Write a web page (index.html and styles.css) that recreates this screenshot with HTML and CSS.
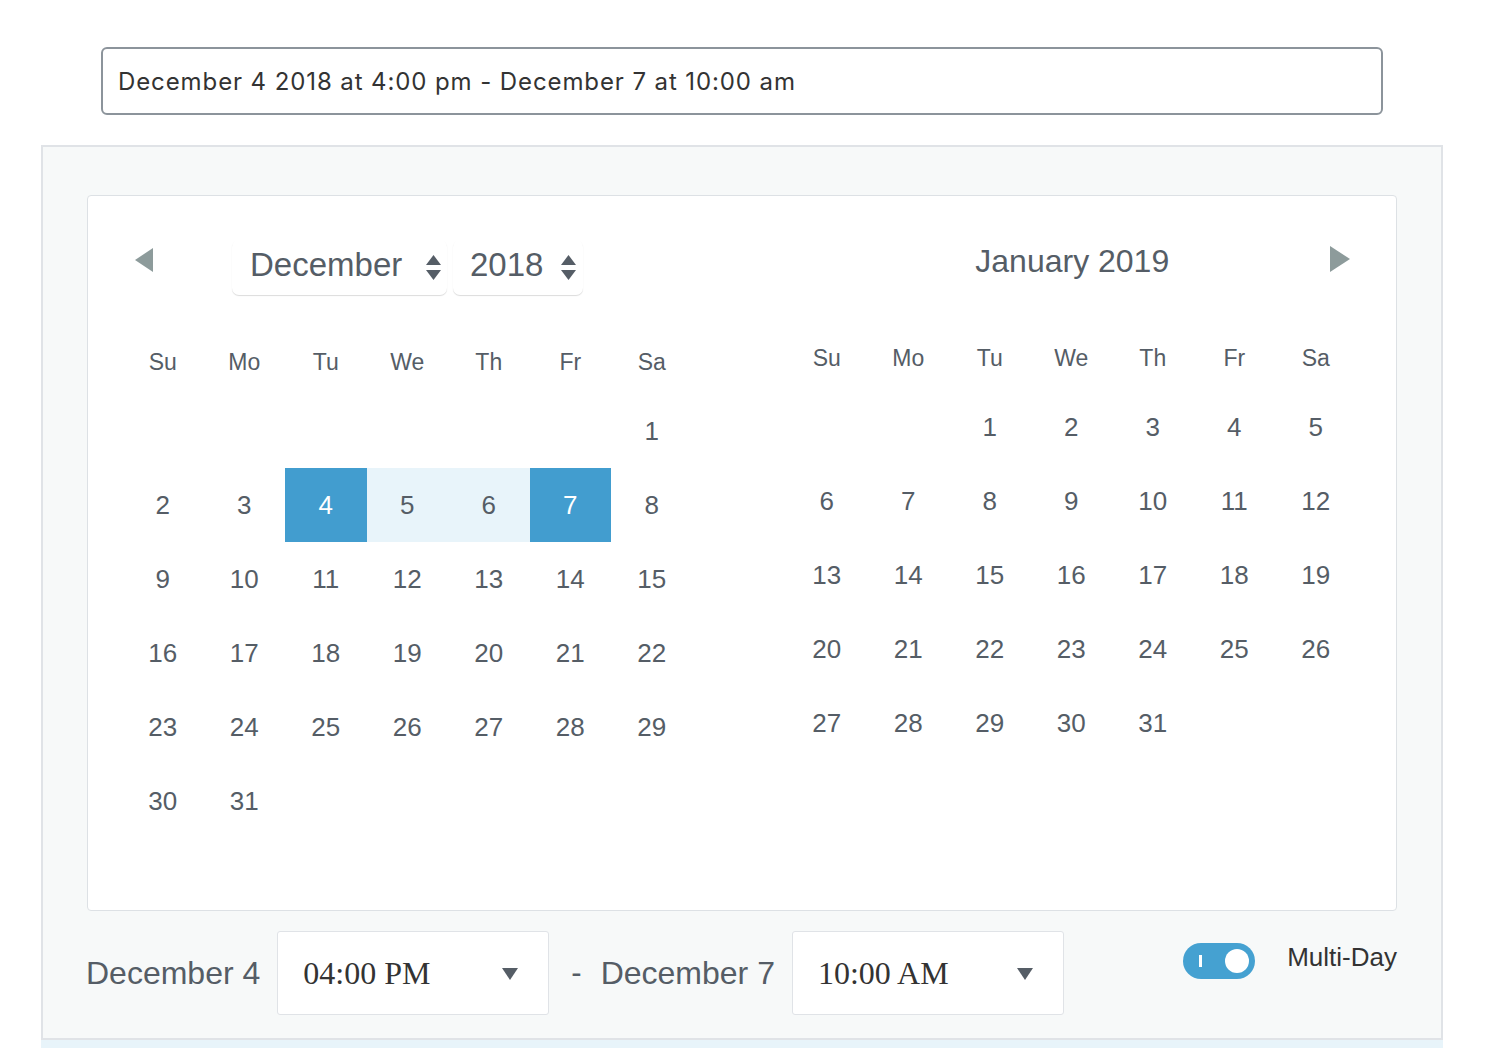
FILE: index.html
```html
<html><head>
<link rel="stylesheet" href="styles.css">
</head>
<body>
  <div class="field">December 4 2018 at 4:00 pm - December 7 at 10:00 am</div>

  <div class="picker">
    <div class="card">
      <div class="month">
        <div class="month-head left-head">
          <div class="nav nav-prev">
            <svg width="18" height="24" viewBox="0 0 18 24"><polygon points="18,0 0,12 18,24"/></svg>
          </div>
          <div class="select month-select">
            <span>December</span>
            <svg class="sort" width="15" height="25" viewBox="0 0 15 25"><polygon points="7.5,0 15,10 0,10"/><polygon points="0,15 15,15 7.5,25"/></svg>
          </div>
          <div class="select year-select">
            <span>2018</span>
            <svg class="sort" width="15" height="25" viewBox="0 0 15 25"><polygon points="7.5,0 15,10 0,10"/><polygon points="0,15 15,15 7.5,25"/></svg>
          </div>
        </div>
        <div class="grid" id="decGrid"></div>
      </div>

      <div class="month month-right">
        <div class="month-head right-head">
          <span></span>
          <div class="title">January 2019</div>
          <div class="nav nav-next">
            <svg width="20" height="26" viewBox="0 0 20 26"><polygon points="0,0 20,13 0,26"/></svg>
          </div>
        </div>
        <div class="grid" id="janGrid"></div>
      </div>
    </div>

    <div class="footer">
      <span class="date-label">December 4</span>
      <div class="time-select">
        <span>04:00 PM</span>
        <svg width="16" height="12" viewBox="0 0 16 12"><polygon points="0,0 16,0 8,12"/></svg>
      </div>
      <span class="dash">-</span>
      <span class="date-label">December 7</span>
      <div class="time-select">
        <span>10:00 AM</span>
        <svg width="16" height="12" viewBox="0 0 16 12"><polygon points="0,0 16,0 8,12"/></svg>
      </div>
      <div class="multi">
        <div class="toggle"><span class="toggle-bar"></span><span class="toggle-knob"></span></div>
        <span class="multi-label">Multi-Day</span>
      </div>
    </div>
  </div>
  <div class="below"></div>

<script>
const weekdays = ['Su', 'Mo', 'Tu', 'We', 'Th', 'Fr', 'Sa'];

function buildMonth(el, offset, days, selected, range) {
    weekdays.forEach(w => {
        const d = document.createElement('div');
        d.className = 'wd';
        d.textContent = w;
        el.appendChild(d);
    });
    for (let i = 0; i < offset; i++) {
        const d = document.createElement('div');
        d.className = 'day';
        el.appendChild(d);
    }
    for (let n = 1; n <= days; n++) {
        const d = document.createElement('div');
        d.className = 'day';
        if (selected.includes(n)) d.classList.add('selected');
        if (range.includes(n)) d.classList.add('in-range');
        d.textContent = n;
        el.appendChild(d);
    }
}

buildMonth(document.getElementById('decGrid'), 6, 31, [4, 7], [5, 6]);
buildMonth(document.getElementById('janGrid'), 2, 31, [], []);
</script>
</body></html>
```

FILE: styles.css
```css
:root {
  --text: #555d66;
  --dark: #333333;
  --blue: #429dcf;
  --range: #e8f4fa;
  --line: #e0e3e7;
  --panel: #f7f9f9;
  --arrow: #8d9b9b;
}

body {
  margin: 0;
  background: #ffffff;
  font-family: 'Liberation Sans', Arial, sans-serif;
  color: var(--text);
}

.field {
  margin: 47px 0 0 101px;
  width: 1282px;
  height: 68px;
  box-sizing: border-box;
  border: 2px solid #8c949b;
  border-radius: 6px;
  padding: 0 15px;
  display: flex;
  align-items: center;
  font-family: Inter, 'Open Sans', sans-serif;
  font-size: 24px;
  letter-spacing: 0.9px;
  color: var(--dark);
}

.picker {
  margin: 30px 0 0 41px;
  width: 1402px;
  box-sizing: border-box;
  background: var(--panel);
  border: 2px solid var(--line);
  padding: 48px 44px 23px 44px;
}

.card {
  height: 716px;
  box-sizing: border-box;
  background: #ffffff;
  border: 1px solid #dde1e5;
  border-radius: 4px;
  padding: 40px 0 0 34px;
  display: flex;
  gap: 93.5px;
}

.month {
  width: 570.5px;
}

.month-head {
  height: 94px;
}

.left-head {
  display: flex;
  align-items: flex-start;
}

.nav svg {
  display: block;
  fill: var(--arrow);
}

.nav-prev {
  margin: 12px 0 0 13px;
}

.select {
  height: 55px;
  box-sizing: border-box;
  margin-top: 4px;
  padding-bottom: 5px;
  border-radius: 7px;
  background: #ffffff;
  box-shadow: 0 1px 1px rgba(0, 0, 0, 0.14);
  display: flex;
  align-items: center;
  justify-content: space-between;
  font-size: 33px;
  color: var(--text);
}

.month-select {
  width: 215px;
  margin-left: 79px;
  padding-left: 18px;
  padding-right: 6px;
}

.year-select {
  width: 130px;
  margin-left: 6px;
  padding-left: 17px;
  padding-right: 7px;
}

.sort {
  fill: var(--text);
  margin-top: 5px;
}

.right-head {
  height: 90px;
  display: grid;
  grid-template-columns: 1fr auto 1fr;
  align-items: start;
}

.title {
  line-height: 50px;
  font-size: 32px;
  color: var(--text);
  margin-left: 2px;
}

.nav-next {
  justify-self: end;
  margin: 10px 7px 0 0;
}

.grid {
  display: grid;
  grid-template-columns: repeat(7, 81.5px);
  grid-template-rows: 64px;
  grid-auto-rows: 74px;
}

.wd {
  display: flex;
  align-items: center;
  justify-content: center;
  font-size: 23px;
}

.day {
  display: flex;
  align-items: center;
  justify-content: center;
  font-size: 26px;
}

.day.in-range {
  background: var(--range);
}

.day.selected {
  background: var(--blue);
  color: #ffffff;
}

.footer {
  margin-top: 20px;
  height: 84px;
  display: flex;
  align-items: center;
}

.date-label {
  font-size: 32px;
  color: var(--text);
  margin-left: -1px;
}

.time-select {
  width: 272px;
  height: 84px;
  box-sizing: border-box;
  background: #ffffff;
  border: 1px solid var(--line);
  border-radius: 3px;
  padding: 0 30px 0 25px;
  margin-left: 17px;
  display: flex;
  align-items: center;
  justify-content: space-between;
  font-family: 'Liberation Serif', 'Times New Roman', serif;
  font-size: 32px;
  color: var(--dark);
}

.time-select svg {
  fill: var(--text);
  margin-top: 2px;
}

.dash {
  margin: 0 20px 0 22px;
  font-size: 31px;
}

.multi {
  margin-left: auto;
  align-self: flex-start;
  display: flex;
  align-items: center;
  gap: 32px;
  margin-top: 12px;
}

.toggle {
  position: relative;
  width: 72px;
  height: 36px;
  border-radius: 18px;
  background: #45a1d1;
}

.toggle-bar {
  position: absolute;
  left: 16px;
  top: 12px;
  width: 3px;
  height: 12px;
  background: #ffffff;
}

.toggle-knob {
  position: absolute;
  right: 6px;
  top: 6px;
  width: 24px;
  height: 24px;
  border-radius: 50%;
  background: #ffffff;
}

.multi-label {
  font-size: 26px;
  color: var(--dark);
  margin-top: -8px;
}

.below {
  margin-left: 41px;
  width: 1402px;
  height: 40px;
  background: var(--range);
}
```
